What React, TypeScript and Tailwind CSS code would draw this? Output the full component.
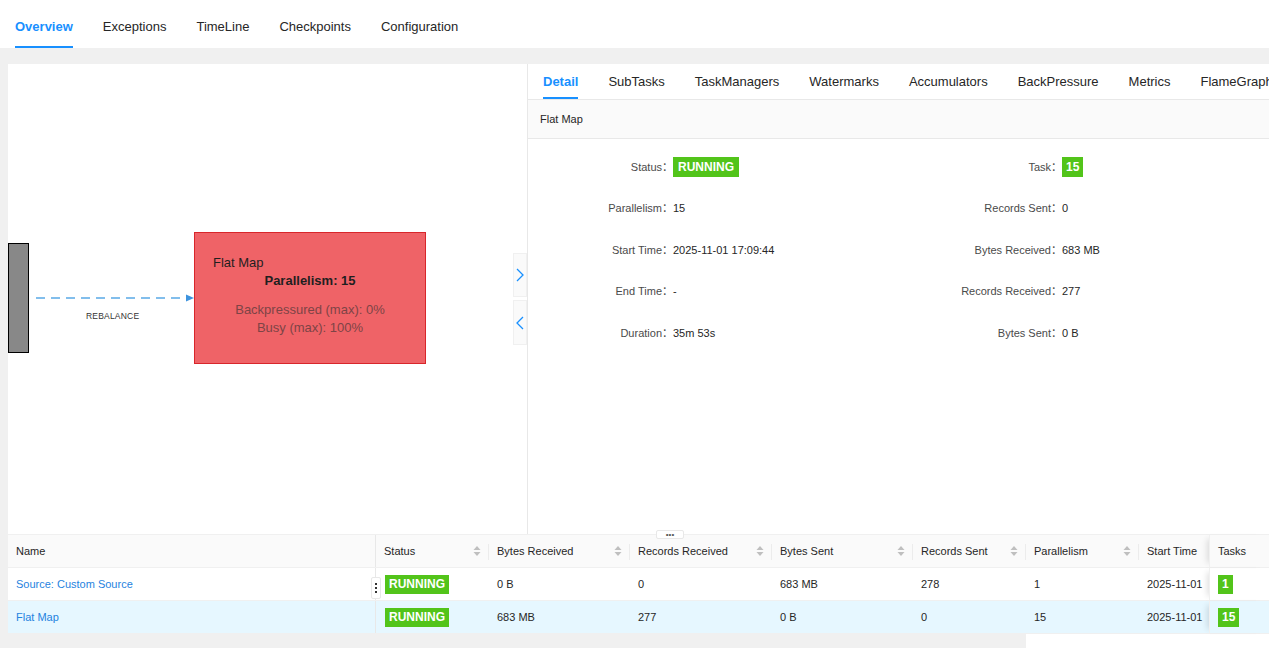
import React from 'react';

const FONT = { fontFamily: '"Liberation Sans", "Noto Sans CJK SC", Arial, sans-serif' };

const topTabs = ['Overview', 'Exceptions', 'TimeLine', 'Checkpoints', 'Configuration'];
const detailTabs = ['Detail', 'SubTasks', 'TaskManagers', 'Watermarks', 'Accumulators', 'BackPressure', 'Metrics', 'FlameGraph'];

function Badge({ children, className = '' }: { children: React.ReactNode; className?: string }) {
  return (
    <span className={`inline-flex items-center justify-center bg-[#52c41a] text-white font-bold text-[12px] leading-none ${className}`}>
      {children}
    </span>
  );
}

function SortIcon() {
  return (
    <svg width="8" height="12" viewBox="0 0 8 12" className="shrink-0">
      <path d="M4 1 L7.5 5 L0.5 5 Z" fill="#bfbfbf" />
      <path d="M4 11 L7.5 7 L0.5 7 Z" fill="#bfbfbf" />
    </svg>
  );
}

function Chevron({ dir }: { dir: 'left' | 'right' }) {
  return (
    <svg width="8" height="14" viewBox="0 0 8 14">
      <path d={dir === 'right' ? 'M1 1 L7 7 L1 13' : 'M7 1 L1 7 L7 13'} stroke="#1890ff" strokeWidth="1.3" fill="none" />
    </svg>
  );
}

function Graph() {
  return (
    <div className="relative w-[519px] h-full overflow-hidden bg-white">
      {/* upstream node (clipped) */}
      <div className="absolute left-0 top-[179px] w-[21px] h-[110px] bg-[#888888] border border-black" />
      <svg className="absolute left-[26px] top-[228px]" width="162" height="12" viewBox="0 0 162 12">
        <line x1="2" y1="6" x2="152" y2="6" stroke="#5aa9e6" strokeWidth="1.3" strokeDasharray="9 6" />
        <path d="M152 2.5 L160 6 L152 9.5 Z" fill="#3d93de" />
      </svg>
      <div className="absolute left-[78px] top-[246px] text-[8.5px] text-[#333] tracking-[0.2px]">REBALANCE</div>

      <div className="absolute left-[186px] top-[168px] w-[232px] h-[132px] bg-[#ef6367] border border-[#d8262b]">
        <div className="absolute left-[18px] top-[20px] text-[13px] text-[#1f1f1f]">Flat Map</div>
        <div className="absolute left-0 right-0 top-[38px] text-center text-[13px] font-bold text-[#1f1f1f]">Parallelism: 15</div>
        <div className="absolute left-0 right-0 top-[68px] text-center text-[13px] leading-[18px] text-[#7d4446]">
          <div>Backpressured (max): 0%</div>
          <div>Busy (max): 100%</div>
        </div>
      </div>

      <div className="absolute right-0 top-[189px] flex flex-col gap-[3px]">
        <div className="w-[14px] h-[44px] bg-[#fafafa] border border-[#f0f0f0] flex items-center justify-center">
          <Chevron dir="right" />
        </div>
        <div className="w-[14px] h-[45px] bg-[#fafafa] border border-[#f0f0f0] flex items-center justify-center">
          <Chevron dir="left" />
        </div>
      </div>
    </div>
  );
}

const leftDetails: [string, React.ReactNode][] = [
  ['Status', <Badge className="h-[20px] px-[5px]">RUNNING</Badge>],
  ['Parallelism', '15'],
  ['Start Time', '2025-11-01 17:09:44'],
  ['End Time', '-'],
  ['Duration', '35m 53s'],
];
const rightDetails: [string, React.ReactNode][] = [
  ['Task', <Badge className="h-[20px] px-[4px]">15</Badge>],
  ['Records Sent', '0'],
  ['Bytes Received', '683 MB'],
  ['Records Received', '277'],
  ['Bytes Sent', '0 B'],
];

function DetailPanel() {
  return (
    <div className="flex-1 min-w-0 h-full border-l border-[#e8e8e8] bg-white overflow-hidden">
      <div className="h-[36px] flex items-stretch gap-[30px] pl-[15px] border-b border-[#e8e8e8] whitespace-nowrap">
        {detailTabs.map((t, i) => (
          <div
            key={t}
            className={`flex items-center shrink-0 text-[13px] border-b-2 pt-[3px] ${
              i === 0 ? 'text-[#1890ff] border-[#1890ff] font-semibold' : 'text-[#262626] border-transparent'
            }`}
          >
            {t}
          </div>
        ))}
      </div>
      <div className="h-[39px] flex items-center pl-[12px] bg-[#fafafa] border-b border-[#e8e8e8] text-[11px] text-[#262626]">
        Flat Map
      </div>
      <div className="pt-[7px] flex text-[11px] text-[#262626]">
        {[leftDetails, rightDetails].map((col, ci) => (
          <div key={ci} className="w-[389px] shrink-0 flex flex-col">
            {col.map(([label, value]) => (
              <div key={label} className="h-[41.5px] flex items-center">
                <span className="w-[145px] shrink-0 text-right text-[#4a4a4a]">{label}：</span>
                <span>{value}</span>
              </div>
            ))}
          </div>
        ))}
      </div>
    </div>
  );
}

type Col = { name: string; w: string; sort?: boolean };
const cols: Col[] = [
  { name: 'Name', w: 'w-[368px]' },
  { name: 'Status', w: 'w-[113px]', sort: true },
  { name: 'Bytes Received', w: 'w-[141px]', sort: true },
  { name: 'Records Received', w: 'w-[142px]', sort: true },
  { name: 'Bytes Sent', w: 'w-[141px]', sort: true },
  { name: 'Records Sent', w: 'w-[113px]', sort: true },
  { name: 'Parallelism', w: 'w-[113px]', sort: true },
  { name: 'Start Time', w: 'w-[70px]' },
];

const rows = [
  { name: 'Source: Custom Source', br: '0 B', rr: '0', bs: '683 MB', rs: '278', p: '1', st: '2025-11-01', tasks: '1' },
  { name: 'Flat Map', br: '683 MB', rr: '277', bs: '0 B', rs: '0', p: '15', st: '2025-11-01', tasks: '15' },
];

function Table() {
  return (
    <div className="relative text-[11px] text-[#262626]">
      {/* resize handle for the top area */}
      <div className="absolute left-[648px] top-[-4px] w-[28px] h-[9px] bg-white border border-[#e8e8e8] rounded-[2px] flex items-center justify-center text-[8px] leading-none text-[#555] z-10">
        •••
      </div>
      <div className="flex h-[34px] bg-[#fafafa] border-t border-b border-[#f0f0f0]">
        {cols.map((c, i) => (
          <div
            key={c.name}
            className={`${c.w} shrink-0 flex items-center justify-between pl-[8px] pr-[8px] whitespace-nowrap overflow-hidden relative ${
              i === 0 ? 'border-r border-[#e8e8e8]' : ''
            }`}
          >
            <span>{c.name}</span>
            {c.sort && <SortIcon />}
            {c.sort && <span className="absolute right-0 top-[9px] h-[16px] w-px bg-[#ececec]" />}
          </div>
        ))}
        <div className="flex-1 flex items-center pl-[8px] shadow-[-6px_0_6px_-4px_rgba(0,0,0,0.12)] border-l border-[#f0f0f0]">Tasks</div>
      </div>
      {rows.map((r, ri) => {
        const cells = [r.br, r.rr, r.bs, r.rs, r.p];
        return (
          <div key={r.name} className={`flex h-[33px] border-b border-[#f0f0f0] ${ri === 1 ? 'bg-[#e6f7ff]' : 'bg-white'}`}>
            <div className="w-[368px] shrink-0 flex items-center pl-[8px] text-[#1f83e0] border-r border-[#e8e8e8] relative">
              {r.name}
              {ri === 0 && (
                <span className="absolute right-[-6px] top-[9px] w-[10px] h-[22px] bg-white border border-[#e8e8e8] rounded-[2px] flex flex-col items-center justify-center gap-[2px] z-10">
                  <span className="w-[2px] h-[2px] bg-[#333]" />
                  <span className="w-[2px] h-[2px] bg-[#333]" />
                  <span className="w-[2px] h-[2px] bg-[#333]" />
                </span>
              )}
            </div>
            <div className="w-[113px] shrink-0 flex items-center pl-[9px]">
              <Badge className="h-[19px] px-[4px]">RUNNING</Badge>
            </div>
            {cells.map((v, i) => (
              <div key={i} className={`${cols[i + 2].w} shrink-0 flex items-center pl-[8px]`}>
                {v}
              </div>
            ))}
            <div className="w-[70px] shrink-0 flex items-center pl-[8px] whitespace-nowrap overflow-hidden">{r.st}</div>
            <div className="flex-1 flex items-center pl-[8px] shadow-[-6px_0_6px_-4px_rgba(0,0,0,0.12)] border-l border-[#f0f0f0]">
              <Badge className="h-[19px] px-[4px]">{r.tasks}</Badge>
            </div>
          </div>
        );
      })}
    </div>
  );
}

export default function App() {
  return (
    <div className="w-full h-[648px] bg-[#f0f0f0] overflow-hidden" style={FONT}>
      <div className="h-[48px] bg-white flex items-stretch gap-[30px] pl-[15px]">
        {topTabs.map((t, i) => (
          <div
            key={t}
            className={`flex items-center text-[13px] border-b-2 pt-[8px] ${
              i === 0 ? 'text-[#1890ff] border-[#1890ff] font-semibold' : 'text-[#262626] border-transparent'
            }`}
          >
            {t}
          </div>
        ))}
      </div>
      <div className="pl-[8px] pt-[16px]">
        <div className="bg-white">
          <div className="flex h-[470px]">
            <Graph />
            <DetailPanel />
          </div>
          <Table />
        </div>
        <div className="flex h-[14px]">
          <div className="w-[1018px]" />
          <div className="flex-1 bg-white" />
        </div>
      </div>
    </div>
  );
}
